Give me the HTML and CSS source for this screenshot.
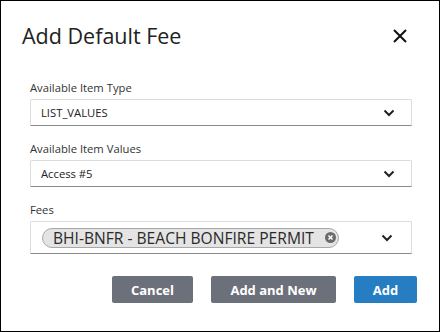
FILE: index.html
```html
<!DOCTYPE html>
<html lang="en">
<head>
    <meta charset="UTF-8">
    <meta name="viewport" content="width=device-width, initial-scale=1.0">
    <title>Add Default Fee</title>
    <link rel="stylesheet" href="styles.css">
</head>
<body>

    <div class="dialog">
        <header class="dialog-header">
            <h1>Add Default Fee</h1>
            <button class="close-btn" aria-label="Close">
                <svg width="16" height="16" viewBox="0 0 16 16"><path d="M2 2 L14 14 M14 2 L2 14" stroke="#111" stroke-width="2" fill="none"/></svg>
            </button>
        </header>

        <div class="dialog-body">
            <div class="field">
                <label>Available Item Type</label>
                <div class="select">
                    <span>LIST_VALUES</span>
                    <svg class="chev" width="12" height="8" viewBox="0 0 12 8"><path d="M1.5 1.5 L6 6 L10.5 1.5" stroke="#222" stroke-width="2" fill="none"/></svg>
                </div>
            </div>

            <div class="field">
                <label>Available Item Values</label>
                <div class="select">
                    <span>Access #5</span>
                    <svg class="chev" width="12" height="8" viewBox="0 0 12 8"><path d="M1.5 1.5 L6 6 L10.5 1.5" stroke="#222" stroke-width="2" fill="none"/></svg>
                </div>
            </div>

            <div class="field">
                <label>Fees</label>
                <div class="select select-multi">
                    <span class="chip">
                        BHI-BNFR - BEACH BONFIRE PERMIT
                        <svg class="chip-x" width="11" height="11" viewBox="0 0 12 12"><circle cx="6" cy="6" r="6" fill="#6b6b6b"/><path d="M3.8 3.8 L8.2 8.2 M8.2 3.8 L3.8 8.2" stroke="#fff" stroke-width="1.6"/></svg>
                    </span>
                    <svg class="chev" width="12" height="8" viewBox="0 0 12 8"><path d="M1.5 1.5 L6 6 L10.5 1.5" stroke="#222" stroke-width="2" fill="none"/></svg>
                </div>
            </div>
        </div>

        <footer class="dialog-footer">
            <button class="btn btn-gray">Cancel</button>
            <button class="btn btn-gray btn-wide">Add and New</button>
            <button class="btn btn-blue">Add</button>
        </footer>
    </div>

</body>
</html>
```

FILE: styles.css
```css
:root {
    --text-main: #222222;
    --text-label: #333333;
    --border-light: #dcdcdc;
    --border-dark: #8a8a8a;
    --btn-gray: #6c707a;
    --btn-blue: #267dc1;
}

* { box-sizing: border-box; margin: 0; padding: 0; font-family: 'Open Sans', sans-serif; }
body { background: #ffffff; }

.dialog { width: 440px; height: 332px; border: 1px solid #000; background: #fff; }

.dialog-header { display: flex; justify-content: space-between; align-items: center; padding: 20px 31px 0 21px; }
.dialog-header h1 { font-size: 21.5px; line-height: 30px; font-weight: 400; color: var(--text-main); }
.close-btn { background: none; border: none; width: 16px; height: 16px; display: flex; cursor: pointer; }

.dialog-body { padding: 29px 27px 0 29px; display: flex; flex-direction: column; gap: 15px; }
.field label { display: block; font-size: 11.25px; line-height: 15px; color: var(--text-label); margin-bottom: 4px; }

.select { height: 27px; display: flex; align-items: center; justify-content: space-between; padding: 0 16px 0 10px; border: 1px solid var(--border-light); border-bottom-color: var(--border-dark); border-radius: 2px 2px 0 0; font-size: 11.25px; color: var(--text-main); }
.select-multi { height: 33px; padding-left: 11px; padding-right: 18px; }

.chip { display: inline-flex; align-items: center; gap: 11px; height: 20px; padding: 0 2px 0 10px; border: 1px solid #a8a8a8; border-radius: 10px; background: #e4e4e4; font-size: 15.6px; color: #2a2a2a; white-space: nowrap; }

.dialog-footer { display: flex; justify-content: flex-end; gap: 18px; padding: 22px 22px 0 0; }
.btn { height: 27px; border: none; border-radius: 2px; color: #fff; font-size: 13px; font-weight: 700; cursor: pointer; }
.btn-gray { background: var(--btn-gray); width: 81px; }
.btn-wide { width: 125px; }
.btn-blue { background: var(--btn-blue); width: 63px; }
```
